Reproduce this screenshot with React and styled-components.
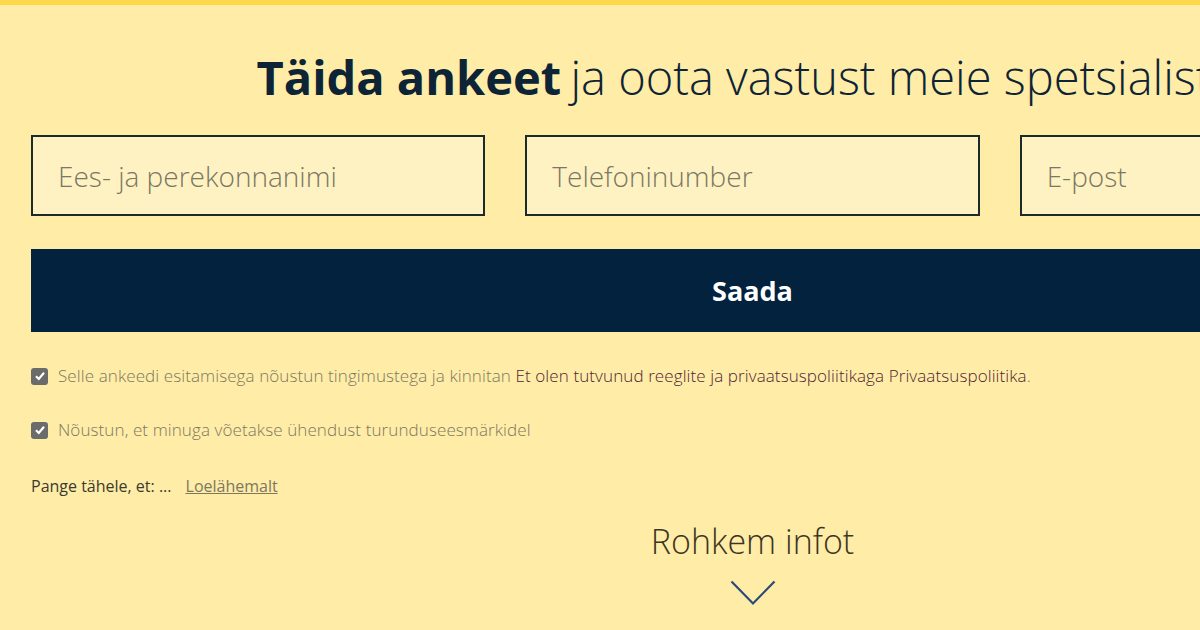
import React from 'react';
import styled, { createGlobalStyle } from 'styled-components';

const GlobalStyle = createGlobalStyle`
  html, body {
    margin: 0;
    padding: 0;
    background: #ffeca6;
    overflow: hidden;
  }
  body {
    font-family: 'Open Sans', 'Liberation Sans', sans-serif;
  }
`;

const Page = styled.div`
  width: 1200px;
  height: 630px;
  overflow: hidden;
  background: #ffeca6;
  border-top: 5px solid #fdd94a;
  box-sizing: border-box;
`;

const Container = styled.div`
  width: 1443px;
  margin-left: 31px;
  display: flex;
  flex-direction: column;
`;

const Title = styled.h1`
  margin: 40px 0 0;
  font-size: 47px;
  line-height: 64px;
  font-weight: 300;
  color: #0d2336;
  text-align: center;
  white-space: nowrap;

  strong {
    font-weight: 700;
    margin-right: -3px;
  }
`;

const Fields = styled.div`
  display: grid;
  grid-template-columns: repeat(3, 1fr);
  column-gap: 40px;
  margin-top: 26px;
`;

const Field = styled.input`
  height: 81px;
  box-sizing: border-box;
  border: 2px solid #1b2a2c;
  background: #fff2c2;
  padding: 0 25px;
  font-family: 'Open Sans', sans-serif;
  font-weight: 300;
  font-size: 28px;
  color: #333;
  outline: none;

  &::placeholder {
    color: #7a7762;
  }
`;

const Submit = styled.button`
  margin-top: 33px;
  height: 83px;
  border: none;
  background: #03223e;
  color: #ffffff;
  font-family: 'Open Sans', sans-serif;
  font-weight: 700;
  font-size: 27px;
  cursor: pointer;
`;

const Consent = styled.label`
  display: flex;
  align-items: center;
  gap: 10px;
  margin-top: ${p => p.$top}px;
  font-size: 17px;
  font-weight: 300;
  color: #7c7862;
  line-height: 22px;
  letter-spacing: 0.1px;

  a {
    color: #4f2436;
    text-decoration: none;
  }
`;

const Box = styled.span`
  width: 17px;
  height: 17px;
  border-radius: 3px;
  background: #6b6b6b;
  display: flex;
  align-items: center;
  justify-content: center;
  flex: none;
`;

const Note = styled.div`
  margin-top: 34px;
  font-size: 16px;
  font-weight: 400;
  color: #3b3a30;
  line-height: 22px;

  a {
    margin-left: 14px;
    color: #7c7862;
    text-decoration: underline;
  }
`;

const More = styled.div`
  margin-top: 22px;
  display: flex;
  flex-direction: column;
  align-items: center;
  font-size: 34px;
  font-weight: 300;
  color: #3b3623;
  line-height: 44px;

  svg {
    margin-top: 17px;
  }
`;

const Check = () => (
  <Box>
    <svg width="12" height="12" viewBox="0 0 12 12">
      <path d="M2 6.3 L4.8 9 L10 2.8" fill="none" stroke="#fff" strokeWidth="2.2" />
    </svg>
  </Box>
);

export default function App() {
  return (
    <Page>
      <GlobalStyle />
      <Container>
        <Title>
          <strong>Täida ankeet</strong> ja oota vastust meie spetsialistilt
        </Title>
        <Fields>
          <Field placeholder="Ees- ja perekonnanimi" />
          <Field placeholder="Telefoninumber" />
          <Field placeholder="E-post" />
        </Fields>
        <Submit>Saada</Submit>
        <Consent $top={33}>
          <Check />
          <span>
            Selle ankeedi esitamisega nõustun tingimustega ja kinnitan{' '}
            <a href="#">Et olen tutvunud reeglite ja privaatsuspoliitikaga Privaatsuspoliitika</a>.
          </span>
        </Consent>
        <Consent $top={32}>
          <Check />
          <span>Nõustun, et minuga võetakse ühendust turunduseesmärkidel</span>
        </Consent>
        <Note>
          Pange tähele, et: ...
          <a href="#">Loelähemalt</a>
        </Note>
        <More>
          Rohkem infot
          <svg width="46" height="26" viewBox="0 0 46 26">
            <path d="M1.5 1.5 L23 23.5 L44.5 1.5" fill="none" stroke="#2b4a7c" strokeWidth="2.2" />
          </svg>
        </More>
      </Container>
    </Page>
  );
}
